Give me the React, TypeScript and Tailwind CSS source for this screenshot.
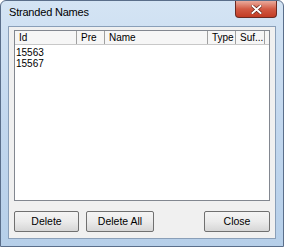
import React from "react";

const cols = [
  { label: "Id", w: 62 },
  { label: "Pre", w: 28 },
  { label: "Name", w: 103 },
  { label: "Type", w: 28 },
  { label: "Suf...", w: 29 },
];

function Btn({ label, w }: { label: string; w: string }) {
  return (
    <div
      className={`${w} h-[21px] flex items-center justify-center border border-[#707070] rounded-[2px] bg-gradient-to-b from-[#f4f4f4] via-[#ebebeb] to-[#d6d6d6] text-[10.5px] text-black`}
    >
      {label}
    </div>
  );
}

export default function App() {
  return (
    <div
      className="w-[284px] h-[247px] bg-white"
      style={{ fontFamily: "'Liberation Sans', Arial, sans-serif" }}
    >
      <div className="w-[284px] h-[247px] border border-[#5a6e8a] rounded-t-[6px] bg-gradient-to-b from-[#d4e4f4] via-[#c2d7ee] to-[#b6cfe9] flex flex-col">
        <div className="h-[25px] flex items-start justify-between pl-[8px] pr-[6px]">
          <span className="mt-[3px] text-[11px] tracking-[-0.2px] text-black">
            Stranded Names
          </span>
          <div className="w-[42px] h-[17px] rounded-b-[4px] border border-[#6b2a22] border-t-0 bg-gradient-to-b from-[#e9aa9c] via-[#d25a44] to-[#c23c24] flex items-center justify-center">
            <svg width="11" height="9" viewBox="0 0 11 9">
              <path d="M1.5 1 L9.5 8 M9.5 1 L1.5 8" stroke="#5a1a10" strokeWidth="3.2" strokeLinecap="square" />
              <path d="M1.5 1 L9.5 8 M9.5 1 L1.5 8" stroke="#ffffff" strokeWidth="2" strokeLinecap="square" />
            </svg>
          </div>
        </div>
        <div className="mx-[7px] mb-[7px] flex-1 border border-[#8a9fb8] bg-[#f0f0f0] flex flex-col px-[5px] pt-[3px] pb-[6px]">
          <div className="flex-1 border border-[#828790] bg-white flex flex-col">
            <div className="flex h-[14px] bg-[#f6f6f6] border-b border-[#c8c8c8]">
              {cols.map((c) => (
                <div
                  key={c.label}
                  className="h-[13px] border-r border-[#a0a0a0] text-[10px] leading-[13px] pl-[4px] text-black"
                  style={{ width: c.w }}
                >
                  {c.label}
                </div>
              ))}
              <div className="flex-1" />
            </div>
            <div className="pl-[1px] pt-[2px] text-[10px] leading-[11px] text-black">
              <div>15563</div>
              <div>15567</div>
            </div>
          </div>
          <div className="flex items-center mt-[10px]">
            <Btn label="Delete" w="w-[65px]" />
            <div className="w-[7px]" />
            <Btn label="Delete All" w="w-[68px]" />
            <div className="flex-1" />
            <Btn label="Close" w="w-[66px]" />
          </div>
        </div>
      </div>
    </div>
  );
}
